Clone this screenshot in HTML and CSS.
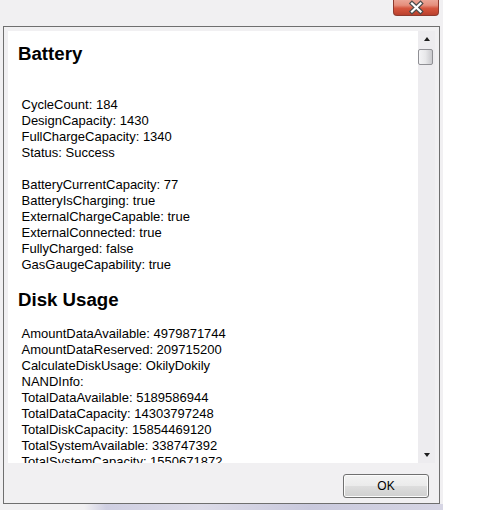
FILE: index.html
```html
<!DOCTYPE html>
<html>
<head>
<meta charset="utf-8">
<link rel="stylesheet" href="styles.css">
</head>
<body>
<div class="window">
  <div class="titlebar">
    <div class="close">
      <svg width="46" height="16" viewBox="0 0 46 16">
        <path d="M19 3.5 L27.5 11.5 M27.5 3.5 L19 11.5" stroke="#4c4c4c" stroke-width="4.5" fill="none" stroke-linecap="square"/>
        <path d="M19 3.5 L27.5 11.5 M27.5 3.5 L19 11.5" stroke="#ffffff" stroke-width="2.2" fill="none" stroke-linecap="square"/>
      </svg>
    </div>
  </div>
  <div class="frame">
    <div class="pane">
      <div class="content">
        <h2 class="heading">Battery</h2>
        <div class="props">
          <div class="blank"></div>
          <div>CycleCount: 184</div>
          <div>DesignCapacity: 1430</div>
          <div>FullChargeCapacity: 1340</div>
          <div>Status: Success</div>
          <div class="blank"></div>
          <div>BatteryCurrentCapacity: 77</div>
          <div>BatteryIsCharging: true</div>
          <div>ExternalChargeCapable: true</div>
          <div>ExternalConnected: true</div>
          <div>FullyCharged: false</div>
          <div>GasGaugeCapability: true</div>
        </div>
        <h2 class="heading heading-next">Disk Usage</h2>
        <div class="props">
          <div>AmountDataAvailable: 4979871744</div>
          <div>AmountDataReserved: 209715200</div>
          <div>CalculateDiskUsage: OkilyDokily</div>
          <div>NANDInfo:</div>
          <div>TotalDataAvailable: 5189586944</div>
          <div>TotalDataCapacity: 14303797248</div>
          <div>TotalDiskCapacity: 15854469120</div>
          <div>TotalSystemAvailable: 338747392</div>
          <div>TotalSystemCapacity: 1550671872</div>
        </div>
      </div>
      <div class="scrollbar">
        <div class="arrow-btn"><div class="tri-up"></div></div>
        <div class="thumb"></div>
        <div class="track-fill"></div>
        <div class="arrow-btn"><div class="tri-down"></div></div>
      </div>
    </div>
    <div class="footer">
      <button class="ok">OK</button>
    </div>
  </div>
  <div class="bottom-strip"></div>
</div>
</body>
</html>
```

FILE: styles.css
```css
html, body {
  margin: 0;
  padding: 0;
  background: #ffffff;
}

.window {
  width: 443px;
  height: 510px;
  background: #f1f0f2;
  display: flex;
  flex-direction: column;
  box-sizing: border-box;
}

.titlebar {
  height: 26px;
  display: flex;
  justify-content: flex-end;
  padding-right: 4px;
  flex: none;
}

.close {
  width: 46px;
  height: 16px;
  box-sizing: border-box;
  border: 1px solid #8e3a2e;
  border-top: none;
  border-radius: 0 0 4px 4px;
  background: linear-gradient(180deg, #eba596 0%, #e58e7c 35%, #d5563f 55%, #c84a34 80%, #b8402e 100%);
  position: relative;
  overflow: hidden;
}

.close svg {
  position: absolute;
  left: -1px;
  top: 0;
}

.frame {
  margin-left: 3px;
  width: 437px;
  height: 478px;
  box-sizing: border-box;
  border: 1px solid #6f6f6f;
  padding: 4px 4px 0 4px;
  display: flex;
  flex-direction: column;
  flex: none;
}

.pane {
  height: 432px;
  display: flex;
  flex: none;
}

.content {
  width: 410px;
  background: #ffffff;
  overflow: hidden;
  padding: 12px 0 0 10px;
  box-sizing: border-box;
  color: #000000;
}

.heading {
  font-family: "Liberation Sans", Arial, sans-serif;
  font-weight: 700;
  font-size: 18.67px;
  line-height: 22px;
  margin: 0 0 15.5px 0;
}

.heading-next {
  margin-top: 16px;
}

.props {
  font-family: "Liberation Sans", Arial, sans-serif;
  font-size: 13px;
  line-height: 16px;
  margin-left: 3.5px;
  white-space: nowrap;
}

.blank {
  height: 16px;
}

.scrollbar {
  width: 17px;
  background: #edecef;
  display: flex;
  flex-direction: column;
}

.arrow-btn {
  height: 17px;
  display: flex;
  align-items: center;
  justify-content: center;
  flex: none;
}

.tri-up {
  width: 0;
  height: 0;
  border-left: 3.5px solid transparent;
  border-right: 3.5px solid transparent;
  border-bottom: 4px solid #1e1e1e;
  margin-top: -1px;
}

.tri-down {
  width: 0;
  height: 0;
  border-left: 3.5px solid transparent;
  border-right: 3.5px solid transparent;
  border-top: 4px solid #1e1e1e;
  margin-top: 1px;
}

.thumb {
  width: 15px;
  height: 16px;
  margin-top: 1px;
  box-sizing: border-box;
  border: 1px solid #8f8f94;
  border-radius: 2px;
  background: linear-gradient(90deg, #f4f4f6 0%, #e8e8ea 50%, #c9c9cd 100%);
  flex: none;
}

.track-fill {
  flex: 1;
}

.footer {
  height: 40px;
  display: flex;
  justify-content: flex-end;
  align-items: flex-start;
  padding-right: 6px;
  flex: none;
}

.ok {
  margin-top: 11px;
  width: 86px;
  height: 24px;
  box-sizing: border-box;
  border: 1px solid #707070;
  border-radius: 3px;
  background: linear-gradient(180deg, #f3f3f3 0%, #ebebeb 48%, #dddddd 52%, #cfcfcf 100%);
  box-shadow: inset 0 0 0 1px #fcfcfc;
  font-family: "Liberation Sans", Arial, sans-serif;
  font-size: 12px;
  color: #000000;
  padding: 0;
}

.bottom-strip {
  height: 6px;
  flex: none;
  background: linear-gradient(90deg, #f1f0f2 0%, #f1f0f2 19%, #cfcfe2 24%, #dcdbe8 45%, #c9c9dd 70%, #d6d5e4 100%);
}
```
